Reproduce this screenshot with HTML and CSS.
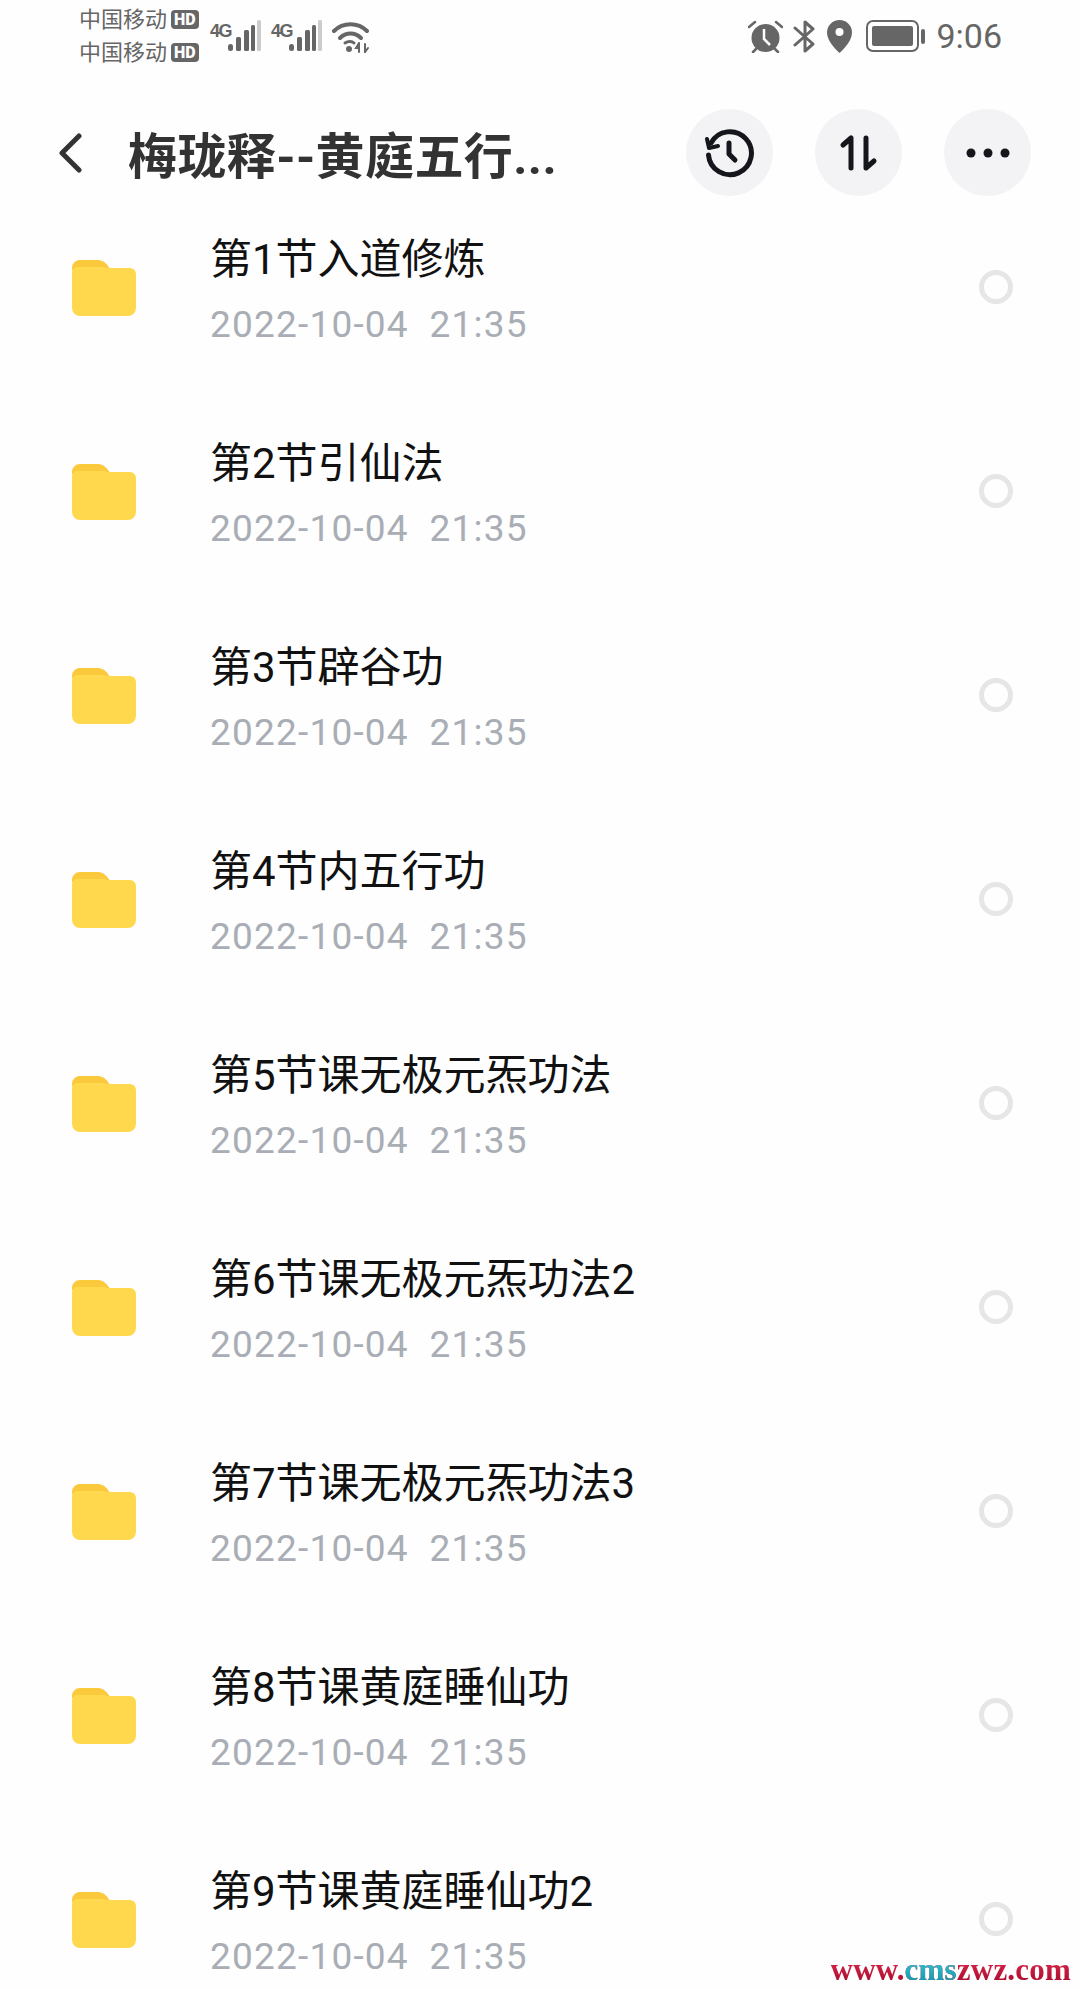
FILE: index.html
```html
<!DOCTYPE html>
<html lang="zh-CN">
<head>
<meta charset="UTF-8">
<meta name="viewport" content="width=device-width, initial-scale=1.0">
<title>梅珑释--黄庭五行</title>
<link rel="stylesheet" href="styles.css">
</head>
<body>

<svg class="defs" width="0" height="0">
    <symbol id="folder" viewBox="0 0 64 57">
        <path d="M0 9a8 8 0 0 1 8-8h17c5 0 8 2 11 6l3 4H0z" fill="#fbc93c"/>
        <path d="M0 13a5 5 0 0 1 5-5h27l3 1h23a6 6 0 0 1 6 6v34a8 8 0 0 1-8 8H8a8 8 0 0 1-8-8z" fill="#ffd84e"/>
    </symbol>
    <symbol id="bars" viewBox="0 0 33 32">
        <rect x="0" y="24" width="5" height="7" rx="2.5" fill="#666"/>
        <rect x="8" y="17" width="5" height="14" rx="1.5" fill="#666"/>
        <rect x="16" y="10" width="5" height="21" rx="1.5" fill="#666"/>
        <rect x="23" y="5" width="4" height="26" rx="1.5" fill="#666"/>
        <rect x="29" y="0" width="4" height="31" rx="1.5" fill="#ccc"/>
    </symbol>
</svg>

<div id="page">
    <div class="status">
        <div class="carriers">
            <div class="carrier">中国移动<span class="hd">HD</span></div>
            <div class="carrier">中国移动<span class="hd">HD</span></div>
        </div>
        <div class="signal"><span class="net">4G</span><svg class="bars"><use href="#bars"/></svg></div>
        <div class="signal"><span class="net">4G</span><svg class="bars"><use href="#bars"/></svg></div>
        <svg class="wifi" viewBox="0 0 37 33" fill="none" stroke="#666" stroke-width="4" stroke-linecap="round">
            <path d="M2 11C11 2 26 2 35 11"/>
            <path d="M8 18c6-6 15-6 21 0"/>
            <path d="M13 23c3-2 7-2 9 0" stroke-width="3"/>
            <circle cx="17" cy="29" r="3" fill="#666" stroke="none"/>
            <path d="M27 23l-3 5h3m0-5v9M33 24v8l3-4" stroke-width="2"/>
        </svg>
        <div class="spacer"></div>
        <svg class="alarm" viewBox="0 0 35 33">
            <circle cx="17.500" cy="18" r="14" fill="#666"/>
            <path d="M16 9v10l6 6" fill="none" stroke="#fefefe" stroke-width="2.500"/>
            <path d="M1 7l6-5M34 7l-6-5M5 32l3-3M30 32l-3-3" fill="none" stroke="#666" stroke-width="2.500" stroke-linecap="round"/>
        </svg>
        <svg class="bt" viewBox="0 0 22 33" fill="none" stroke="#666" stroke-width="3" stroke-linejoin="round" stroke-linecap="round">
            <path d="M2 8l18 16-8 7V2l8 7L2 25"/>
        </svg>
        <svg class="pin" viewBox="0 0 25 33">
            <path d="M12.500 0C5.500 0 0 5.500 0 12.500 0 20 7 28 12.500 33 18 28 25 20 25 12.500 25 5.500 19.500 0 12.500 0z" fill="#666"/>
            <circle cx="12.500" cy="12" r="4" fill="#fefefe"/>
        </svg>
        <div class="battery"><div class="charge"></div></div>
        <div class="nub"></div>
        <div class="clock">9:06</div>
    </div>

    <div class="toolbar">
        <svg class="back" viewBox="0 0 24 40" fill="none" stroke="#333" stroke-width="5" stroke-linecap="round" stroke-linejoin="round">
            <path d="M21 3L4 20l17 17"/>
        </svg>
        <h1>梅珑释--黄庭五行...</h1>
        <button class="round">
            <svg viewBox="0 0 50 50" fill="none" stroke="#14161c" stroke-width="5" stroke-linecap="round" stroke-linejoin="round">
                <path d="M6 15A21.500 21.500 0 1 1 3.500 27"/>
                <path d="M2 11l2 9 9-2" stroke-width="4"/>
                <path d="M24 15v11l6 6"/>
            </svg>
        </button>
        <button class="round">
            <svg viewBox="0 0 50 50" fill="none" stroke="#14161c" stroke-width="5" stroke-linecap="round" stroke-linejoin="round">
                <path d="M9 17l8-7v30"/>
                <path d="M32 10v30l8-7"/>
            </svg>
        </button>
        <button class="round">
            <svg viewBox="0 0 50 50" fill="#14161c">
                <circle cx="8" cy="25" r="4.500"/>
                <circle cx="25" cy="25" r="4.500"/>
                <circle cx="42" cy="25" r="4.500"/>
            </svg>
        </button>
    </div>

    <div class="list">
        <div class="row">
            <svg class="folder"><use href="#folder"/></svg>
            <div class="info"><div class="name">第1节入道修炼</div><div class="date">2022-10-04  21:35</div></div>
            <div class="radio"></div>
        </div>
        <div class="row">
            <svg class="folder"><use href="#folder"/></svg>
            <div class="info"><div class="name">第2节引仙法</div><div class="date">2022-10-04  21:35</div></div>
            <div class="radio"></div>
        </div>
        <div class="row">
            <svg class="folder"><use href="#folder"/></svg>
            <div class="info"><div class="name">第3节辟谷功</div><div class="date">2022-10-04  21:35</div></div>
            <div class="radio"></div>
        </div>
        <div class="row">
            <svg class="folder"><use href="#folder"/></svg>
            <div class="info"><div class="name">第4节内五行功</div><div class="date">2022-10-04  21:35</div></div>
            <div class="radio"></div>
        </div>
        <div class="row">
            <svg class="folder"><use href="#folder"/></svg>
            <div class="info"><div class="name">第5节课无极元炁功法</div><div class="date">2022-10-04  21:35</div></div>
            <div class="radio"></div>
        </div>
        <div class="row">
            <svg class="folder"><use href="#folder"/></svg>
            <div class="info"><div class="name">第6节课无极元炁功法2</div><div class="date">2022-10-04  21:35</div></div>
            <div class="radio"></div>
        </div>
        <div class="row">
            <svg class="folder"><use href="#folder"/></svg>
            <div class="info"><div class="name">第7节课无极元炁功法3</div><div class="date">2022-10-04  21:35</div></div>
            <div class="radio"></div>
        </div>
        <div class="row">
            <svg class="folder"><use href="#folder"/></svg>
            <div class="info"><div class="name">第8节课黄庭睡仙功</div><div class="date">2022-10-04  21:35</div></div>
            <div class="radio"></div>
        </div>
        <div class="row">
            <svg class="folder"><use href="#folder"/></svg>
            <div class="info"><div class="name">第9节课黄庭睡仙功2</div><div class="date">2022-10-04  21:35</div></div>
            <div class="radio"></div>
        </div>
    </div>

    <div class="stamp">www.<span class="mid">cms</span>zwz.com</div>
</div>

</body>
</html>
```

FILE: styles.css
```css
body {
    margin: 0;
    background-color: #fefefe;
    font-family: Roboto, "Noto Sans CJK SC", sans-serif;
}
.defs {
    position: absolute;
}
#page {
    position: relative;
    height: 1989px;
    overflow: hidden;
}

/* status bar */
.status {
    display: flex;
    align-items: center;
    height: 72px;
    padding: 0 78px 0 79px;
    color: #666;
}
.carriers {
    display: flex;
    flex-direction: column;
    gap: 11px;
    width: 131px;
}
.carrier {
    display: flex;
    align-items: center;
    font-size: 22px;
    line-height: 22px;
}
.hd {
    margin-left: 4px;
    padding: 0 3px;
    background-color: #666;
    border-radius: 4px;
    color: #fefefe;
    font-size: 16px;
    font-weight: 900;
    line-height: 19px;
}
.signal {
    display: flex;
    align-items: flex-end;
    width: 61px;
    height: 32px;
}
.net {
    align-self: flex-start;
    width: 18px;
    margin-top: 2px;
    font-family: "Liberation Sans", sans-serif;
    font-size: 18px;
    font-weight: 700;
    letter-spacing: -1.5px;
    line-height: 18px;
}
.bars {
    width: 33px;
    height: 32px;
}
.wifi {
    width: 37px;
    height: 33px;
}
.spacer {
    flex: 1;
}
.alarm {
    width: 35px;
    height: 33px;
    margin-right: 10px;
}
.bt {
    width: 22px;
    height: 33px;
    margin-right: 12px;
}
.pin {
    width: 25px;
    height: 33px;
    margin-right: 14px;
}
.battery {
    box-sizing: border-box;
    width: 53px;
    height: 32px;
    padding: 4px;
    border: 2.5px solid #666;
    border-radius: 7px;
}
.charge {
    height: 100%;
    background-color: #666;
    border-radius: 2px;
}
.nub {
    width: 4px;
    height: 15px;
    margin: 0 11px 0 2px;
    background-color: #666;
    border-radius: 2px;
}
.clock {
    font-size: 34px;
    line-height: 36px;
}

/* title row */
.toolbar {
    display: flex;
    align-items: center;
    height: 87px;
    padding: 37px 49px 0 58px;
}
.back {
    width: 24px;
    height: 40px;
    margin-right: 46px;
}
h1 {
    flex: 1;
    margin: 0;
    color: #333;
    font-size: 49px;
    font-weight: 700;
    letter-spacing: 0.4px;
    white-space: nowrap;
}
.round {
    display: flex;
    align-items: center;
    justify-content: center;
    width: 87px;
    height: 87px;
    margin-left: 42px;
    padding: 0;
    border: none;
    border-radius: 50%;
    background-color: #f3f3f5;
}
.round svg {
    width: 50px;
    height: 50px;
}

/* folder rows */
.list {
    margin-top: -11px;
}
.row {
    display: flex;
    align-items: center;
    height: 204px;
    padding: 0 67px 0 72px;
}
.folder {
    width: 64px;
    height: 57px;
    margin-right: 74px;
}
.info {
    flex: 1;
    padding-top: 5px;
}
.name {
    color: #111;
    font-size: 42px;
    line-height: 56px;
}
.date {
    margin-top: 15px;
    color: #a9adb5;
    font-size: 37px;
    letter-spacing: 1.2px;
    line-height: 44px;
    white-space: pre;
}
.radio {
    box-sizing: border-box;
    width: 34px;
    height: 34px;
    border: 5px solid #e6e6e6;
    border-radius: 50%;
}

.stamp {
    position: absolute;
    right: 9px;
    bottom: 5px;
    background: linear-gradient(#e02a50, #a80c2c);
    -webkit-background-clip: text;
    background-clip: text;
    color: transparent;
    font-family: "Liberation Serif", serif;
    font-size: 31px;
    font-weight: 700;
    letter-spacing: 0.2px;
    line-height: 28px;
}
.mid {
    background: linear-gradient(#3fd0dc, #0f8fa8);
    -webkit-background-clip: text;
    background-clip: text;
}
```
